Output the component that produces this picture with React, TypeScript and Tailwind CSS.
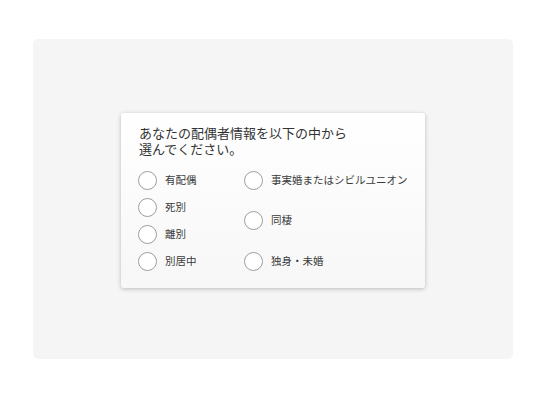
const left = ['有配偶', '死別', '離別', '別居中']
const right = ['事実婚またはシビルユニオン', '同棲', '独身・未婚']

function Radio({ label }: { label: string }) {
  return (
    <label className="flex items-center gap-2 h-[19px]">
      <span className="w-[19px] h-[19px] rounded-full border border-[#9e9e9e] bg-white shrink-0" />
      <span className="text-[10.5px] text-[#3a3a3a] leading-none">{label}</span>
    </label>
  )
}

export default function App() {
  return (
    <div
      className="w-[547px] h-[400px] bg-white pt-[39px] pl-[33px]"
      style={{ fontFamily: '"Noto Sans CJK JP", "Noto Sans", sans-serif' }}
    >
      <div className="w-[480px] h-[320px] bg-[#f5f5f5] rounded-[5px] flex items-center justify-center">
        <div className="w-[304px] rounded-[3px] bg-gradient-to-b from-white to-[#f7f7f7] shadow-[0_1px_4px_rgba(0,0,0,0.25)] pl-[17px] pr-3 pt-[12px] pb-[17px] translate-y-[1px]">
          <p className="text-[13px] leading-[16px] text-[#333] pl-[1px]">
            <span className="block">あなたの配偶者情報を以下の中から</span>
            <span className="block">選んでください。</span>
          </p>
          <div className="flex mt-[14px]">
            <div className="w-[106px] flex flex-col gap-[8px]">
              {left.map(l => <Radio key={l} label={l} />)}
            </div>
            <div className="flex flex-col justify-between">
              {right.map(r => <Radio key={r} label={r} />)}
            </div>
          </div>
        </div>
      </div>
    </div>
  )
}
